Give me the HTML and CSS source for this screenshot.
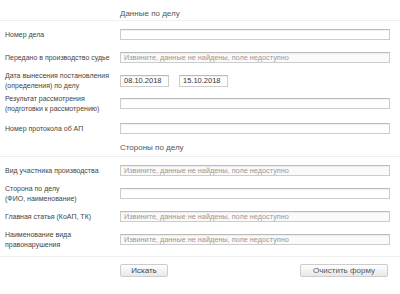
FILE: index.html
```html
<!doctype html>
<html lang="ru">
<head>
    <meta charset="UTF-8">
    <title>Поиск по делу</title>
    <link rel="stylesheet" href="styles.css">
</head>
<body>
<form class="form">
    <div class="section-title">Данные по делу</div>
    <div class="row">
        <label class="label">Номер дела</label>
        <input class="field">
    </div>
    <div class="row">
        <label class="label">Передано в производство судье</label>
        <input class="field field-off" placeholder="Извините, данные не найдены, поле недоступно" disabled>
    </div>
    <div class="row">
        <label class="label">Дата вынесения постановления (определения) по делу</label>
        <div class="dates">
            <input class="field date" value="08.10.2018">
            <input class="field date" value="15.10.2018">
        </div>
    </div>
    <div class="row">
        <label class="label">Результат рассмотрения (подготовки к рассмотрению)</label>
        <input class="field">
    </div>
    <div class="row row-last">
        <label class="label">Номер протокола об АП</label>
        <input class="field">
    </div>

    <div class="section-title second">Стороны по делу</div>
    <div class="row">
        <label class="label">Вид участника производства</label>
        <input class="field field-off" placeholder="Извините, данные не найдены, поле недоступно" disabled>
    </div>
    <div class="row">
        <label class="label">Сторона по делу<br>(ФИО, наименование)</label>
        <input class="field">
    </div>
    <div class="row">
        <label class="label">Главная статья (КоАП, ТК)</label>
        <input class="field field-off" placeholder="Извините, данные не найдены, поле недоступно" disabled>
    </div>
    <div class="row">
        <label class="label">Наименование вида правонарушения</label>
        <input class="field field-off" placeholder="Извините, данные не найдены, поле недоступно" disabled>
    </div>

    <div class="actions">
        <div></div>
        <div class="buttons">
            <button type="button" class="btn btn-search">Искать</button>
            <button type="reset" class="btn btn-clear">Очистить форму</button>
        </div>
    </div>
</form>
</body>
</html>
```
FILE: styles.css
```css
body {
    margin: 0;
    background: #ffffff;
    font-family: 'Liberation Sans', Arial, sans-serif;
    color: #444444;
}
.form {
    width: 400px;
}
.section-title {
    padding: 9px 0 1px 120px;
    font-size: 8px;
    line-height: 10px;
    color: #555555;
    border-bottom: 1px solid #eeeeee;
}
.section-title.second {
    padding: 3px 0 3px 120px;
}
.row {
    display: grid;
    grid-template-columns: 115px 270px;
    align-items: center;
    height: 23px;
    padding-left: 5px;
}
.section-title + .row {
    margin-top: 2px;
}
.row-last {
    margin-top: 2px;
}
.label {
    font-size: 7px;
    line-height: 10px;
    color: #444444;
    padding-right: 8px;
}
.field {
    box-sizing: border-box;
    height: 11px;
    width: 100%;
    margin: 0;
    padding: 0 3px;
    border: 1px solid #cccccc;
    border-top-color: #bbbbbb;
    border-radius: 0;
    background: #ffffff;
    box-shadow: inset 0 1px 1px rgba(0, 0, 0, 0.06);
    font-family: 'Liberation Sans', Arial, sans-serif;
    font-size: 7.5px;
    color: #333333;
    outline: none;
}
.field-off {
    background: #fafafa;
    font-size: 7.3px;
}
.field::placeholder {
    color: #999999;
}
.dates {
    display: flex;
    gap: 10px;
}
.date {
    width: 49px;
    height: 12px;
}
.actions {
    display: grid;
    grid-template-columns: 115px 268px;
    padding: 7px 0 0 5px;
    border-top: 1px solid #eeeeee;
    margin-top: 5px;
}
.buttons {
    display: flex;
    justify-content: space-between;
}
.btn {
    box-sizing: border-box;
    height: 13px;
    padding: 0;
    border: 1px solid #cccccc;
    border-radius: 2px;
    background: linear-gradient(#ffffff, #e8e8e8);
    font-family: 'Liberation Sans', Arial, sans-serif;
    font-size: 8px;
    color: #444444;
}
.btn-search {
    width: 48px;
}
.btn-clear {
    width: 88px;
    color: #555555;
}
```
